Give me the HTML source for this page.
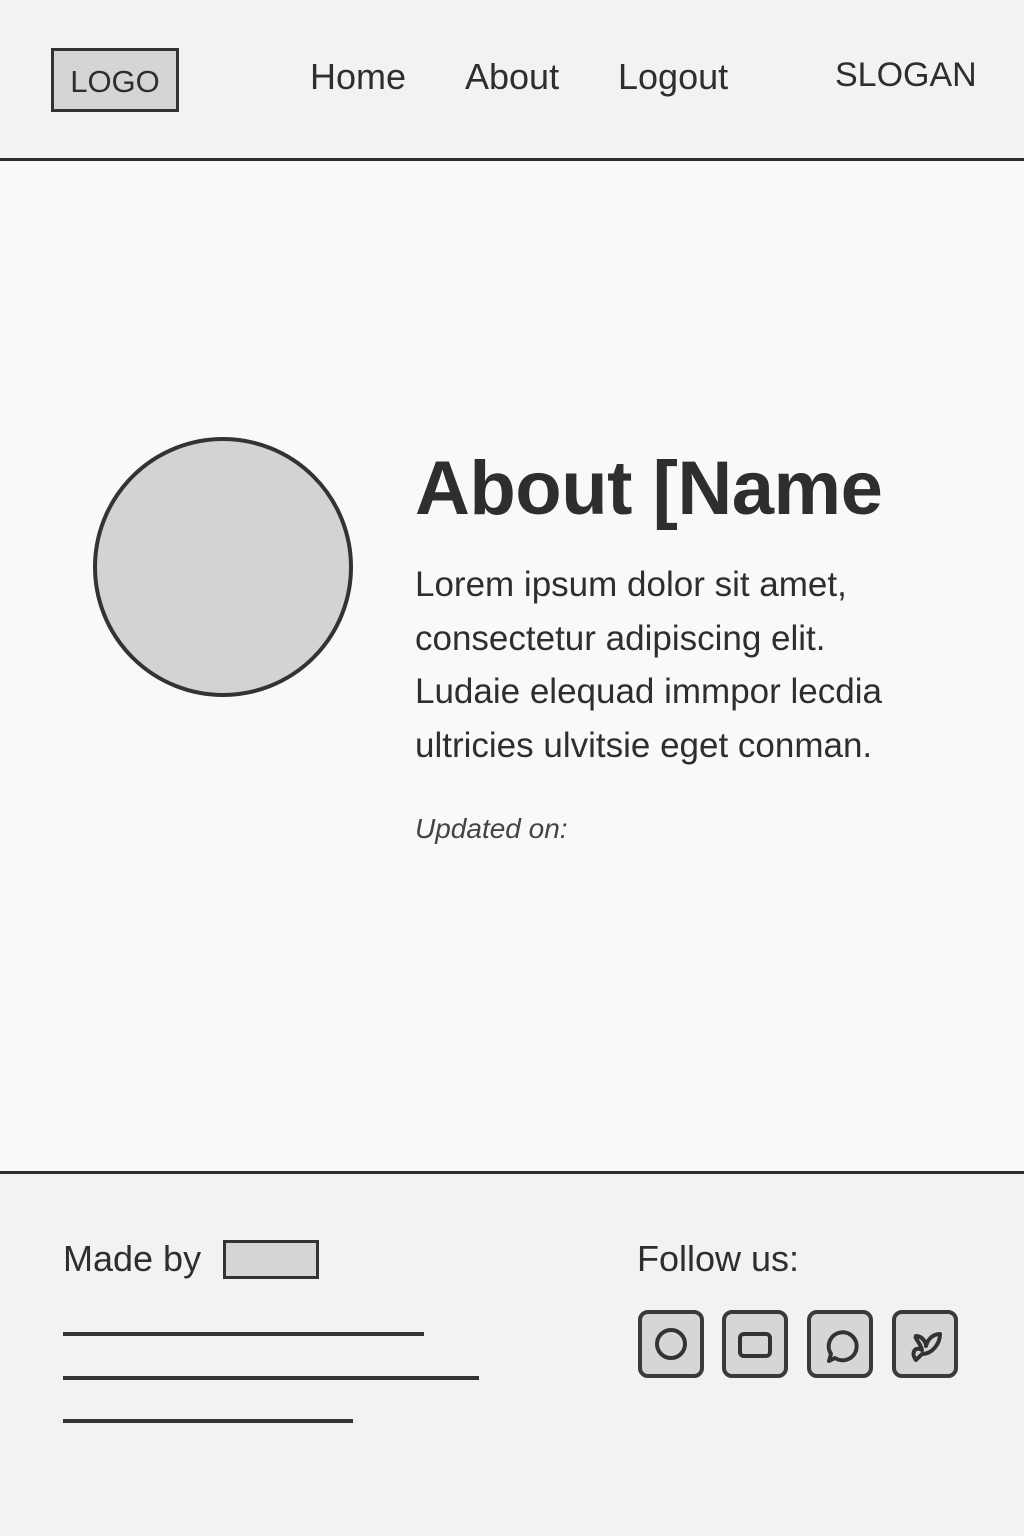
<!DOCTYPE html>
<html><head><style>
*{margin:0;padding:0;box-sizing:border-box}
body{width:1024px;height:1536px;background:#f9f9f9;font-family:"Liberation Sans",sans-serif;color:#2e2e2e;position:relative;overflow:hidden}
.a{position:absolute}
header{position:absolute;left:0;top:0;width:1024px;height:161px;background:#f2f2f2;border-bottom:3px solid #2e2e2e}
footer{position:absolute;left:0;top:1171px;width:1024px;height:365px;background:#f2f2f2;border-top:3px solid #2e2e2e}
.nav{font-size:36px;top:56px}
.ic{position:absolute;top:1310px;width:66px;height:68px;border:4px solid #3a3a3a;border-radius:10px;background:#d6d6d6}
.ln{position:absolute;height:4px;background:#333;left:63px}
</style></head><body>
<header>
<div class="a" style="left:51px;top:48px;width:128px;height:64px;border:3px solid #333;background:#d5d5d5;font-size:31px;text-align:center;line-height:62px">LOGO</div>
<div class="a nav" style="left:310px">Home</div>
<div class="a nav" style="left:465px">About</div>
<div class="a nav" style="left:618px">Logout</div>
<div class="a nav" style="left:835px;font-size:34px">SLOGAN</div>
</header>
<div class="a" style="left:93px;top:437px;width:260px;height:260px;border-radius:50%;border:4px solid #333;background:#d3d3d3"></div>
<div class="a" style="left:415px;top:445px;font-size:76px;font-weight:bold;letter-spacing:-0.5px">About [Name</div>
<div class="a" style="left:415px;top:558px;font-size:35px;line-height:53.5px;width:600px">Lorem ipsum dolor sit amet,<br>consectetur adipiscing elit.<br>Ludaie elequad immpor lecdia<br>ultricies ulvitsie eget conman.</div>
<div class="a" style="left:415px;top:813px;font-size:28px;font-style:italic;color:#444">Updated on:</div>
<footer></footer>
<div class="a" style="left:63px;top:1238px;font-size:36px">Made by</div>
<div class="a" style="left:223px;top:1240px;width:96px;height:39px;border:3px solid #333;background:#d5d5d5"></div>
<div class="a" style="left:637px;top:1238px;font-size:36px">Follow us:</div>
<div class="ln" style="top:1332px;width:361px"></div>
<div class="ln" style="top:1376px;width:416px"></div>
<div class="ln" style="top:1419px;width:290px"></div>
<div class="ic" style="left:638px"><svg width="58" height="60" viewBox="0 0 58 60"><circle cx="29" cy="30" r="14" fill="none" stroke="#333" stroke-width="4"/></svg></div>
<div class="ic" style="left:722px"><svg width="58" height="60" viewBox="0 0 58 60"><rect x="14" y="20" width="30" height="22" rx="4" fill="none" stroke="#333" stroke-width="4"/></svg></div>
<div class="ic" style="left:807px"><svg width="58" height="60" viewBox="0 0 58 60"><path d="M24 44 A14 14 0 1 0 20 40 L18 47 Z" fill="none" stroke="#333" stroke-width="4" stroke-linejoin="round"/></svg></div>
<div class="ic" style="left:892px"><svg width="58" height="60" viewBox="0 0 58 60"><path d="M20 46 C14 38 20 32 26 36 C24 28 18 24 20 22 C26 22 30 28 30 32 C32 24 38 20 44 20 C44 30 36 40 26 40 C24 42 22 44 20 46 Z" fill="none" stroke="#333" stroke-width="4" stroke-linejoin="round"/></svg></div>
</body></html>
